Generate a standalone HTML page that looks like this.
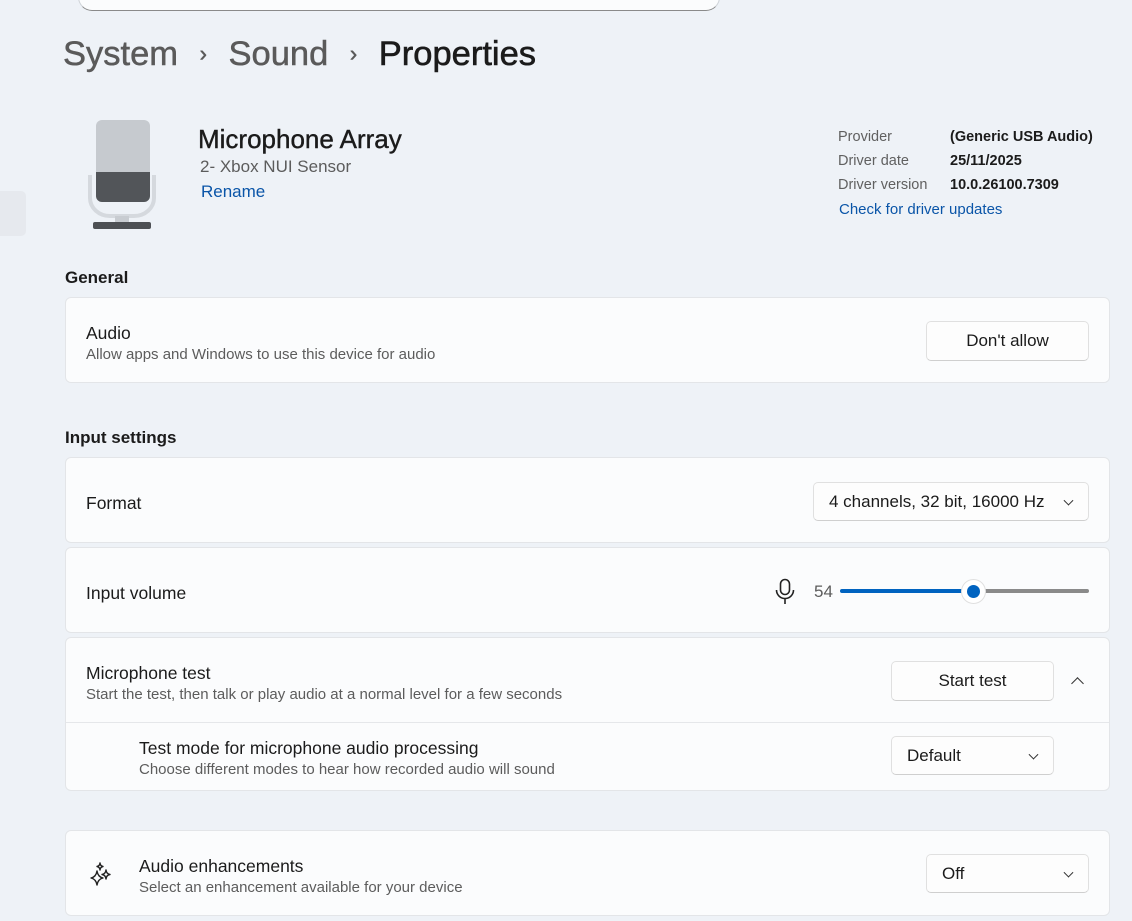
<!DOCTYPE html>
<html><head><style>
*{box-sizing:border-box;margin:0;padding:0}
body{width:1132px;height:921px;overflow:hidden;background:#eef2f7;font-family:"Liberation Sans",sans-serif;color:#1b1b1b;position:relative}
.abs{position:absolute}
.card{position:absolute;left:65px;width:1045px;background:#fbfcfd;border:1px solid #e3e5e8;border-radius:6px}
.t{font-size:17.5px;color:#1b1b1b}
.s{font-size:15px;color:#5c5c5c}
.btn{position:absolute;background:#fdfdfd;border:1px solid #e0e0e0;border-bottom-color:#cfcfcf;border-radius:5px;font-size:17px;color:#1b1b1b;display:flex;align-items:center}
.chev{position:absolute;right:16px;top:50%;width:7px;height:7px;border-right:1.3px solid #333;border-bottom:1.3px solid #333;transform:translateY(-70%) rotate(45deg)}
</style></head><body>
<div class="abs" style="left:78px;top:-20px;width:642px;height:31px;background:#fbfcfd;border:1px solid #cfd3d8;border-top:none;border-radius:0 0 14px 14px;border-bottom-color:#8a8a8a"></div>
<div class="abs" style="left:0;top:191px;width:26px;height:45px;background:#e6e9ee;border-radius:0 5px 5px 0"></div>
<div class="abs" style="left:63px;top:35px;font-size:34.5px;color:#5a5a5a;white-space:nowrap;-webkit-text-stroke:0.5px #5a5a5a">System <span style="font-size:22px;margin:0 12px;position:relative;top:-4px">›</span> Sound <span style="font-size:22px;margin:0 12px;position:relative;top:-4px">›</span> <span style="color:#1b1b1b;-webkit-text-stroke:0.6px #1b1b1b">Properties</span></div>
<svg class="abs" style="left:86px;top:118px" width="72" height="112" viewBox="0 0 72 112">
<path d="M4 57 V80 a20 18 0 0 0 20 18 H48 a20 18 0 0 0 20-18 V57" fill="none" stroke="#d5d9de" stroke-width="4"/>
<rect x="10" y="2" width="54" height="60" rx="6" fill="#c6cacf"/>
<path d="M10 54 H64 V78 a6 6 0 0 1-6 6 H16 a6 6 0 0 1-6-6Z" fill="#525559"/>
<rect x="29" y="98" width="14" height="8" fill="#c8ccd1"/>
<rect x="7" y="104" width="58" height="7" rx="2" fill="#4d5054"/>
</svg>
<div class="abs" style="left:198px;top:124px;font-size:26px;color:#1b1b1b;-webkit-text-stroke:0.4px #1b1b1b">Microphone Array</div>
<div class="abs" style="left:200px;top:157px;font-size:17px;color:#5c5c5c">2- Xbox NUI Sensor</div>
<div class="abs" style="left:201px;top:182px;font-size:17px;color:#0a55a8">Rename</div>
<div class="abs" style="left:838px;top:125px;font-size:14.5px;color:#606060;line-height:24px">Provider<br>Driver date<br>Driver version</div>
<div class="abs" style="left:950px;top:125px;font-size:14.5px;font-weight:bold;color:#1b1b1b;line-height:24px">(Generic USB Audio)<br>25/11/2025<br>10.0.26100.7309</div>
<div class="abs" style="left:839px;top:201px;font-size:15px;color:#0a55a8">Check for driver updates</div>

<div class="abs" style="left:65px;top:268px;font-size:17px;font-weight:bold;color:#1b1b1b">General</div>
<div class="card" style="top:297px;height:86px">
<div class="abs t" style="left:20px;top:25px">Audio</div>
<div class="abs s" style="left:20px;top:48px">Allow apps and Windows to use this device for audio</div>
<div class="btn" style="left:860px;top:23px;width:163px;height:40px;justify-content:center">Don't allow</div>
</div>

<div class="abs" style="left:65px;top:428px;font-size:17px;font-weight:bold;color:#1b1b1b">Input settings</div>
<div class="card" style="top:457px;height:86px">
<div class="abs t" style="left:20px;top:35px">Format</div>
<div class="btn" style="left:747px;top:24px;width:276px;height:39px;padding-left:15px">4 channels, 32 bit, 16000 Hz<span class="chev"></span></div>
</div>
<div class="card" style="top:547px;height:86px">
<div class="abs t" style="left:20px;top:35px">Input volume</div>
<svg class="abs" style="left:708px;top:30px" width="22" height="28" viewBox="0 0 22 28"><rect x="6.5" y="1.5" width="9" height="15" rx="4.5" fill="none" stroke="#222" stroke-width="1.6"/><path d="M2.5 12a8.5 8.5 0 0 0 17 0M11 20.5V26" fill="none" stroke="#222" stroke-width="1.6"/></svg>
<div class="abs" style="left:748px;top:34px;font-size:17px;color:#5c5c5c">54</div>
<div class="abs" style="left:774px;top:41px;width:134px;height:4px;background:#0063c0;border-radius:2px"></div>
<div class="abs" style="left:908px;top:41px;width:115px;height:4px;background:#8a8a8a;border-radius:2px"></div>
<div class="abs" style="left:895px;top:31px;width:25px;height:25px;border-radius:50%;background:#fff;border:1px solid #e0e0e0"></div>
<div class="abs" style="left:901px;top:37px;width:13px;height:13px;border-radius:50%;background:#0063c0"></div>
</div>
<div class="card" style="top:637px;height:154px">
<div class="abs t" style="left:20px;top:25px">Microphone test</div>
<div class="abs s" style="left:20px;top:48px">Start the test, then talk or play audio at a normal level for a few seconds</div>
<div class="btn" style="left:825px;top:23px;width:163px;height:40px;justify-content:center">Start test</div>
<div class="abs" style="left:1007px;top:41px;width:9px;height:9px;border-left:1.4px solid #333;border-top:1.4px solid #333;transform:rotate(45deg)"></div>
<div class="abs" style="left:0;top:84px;width:1043px;height:1px;background:#e5e7ea"></div>
<div class="abs t" style="left:73px;top:100px">Test mode for microphone audio processing</div>
<div class="abs s" style="left:73px;top:123px">Choose different modes to hear how recorded audio will sound</div>
<div class="btn" style="left:825px;top:98px;width:163px;height:39px;padding-left:15px">Default<span class="chev"></span></div>
</div>
<div class="card" style="top:830px;height:86px">
<svg class="abs" style="left:22px;top:30px" width="28" height="28" viewBox="0 0 28 28" fill="none" stroke="#222" stroke-width="1.4" stroke-linejoin="round"><path d="M9 10 Q10 16 15 17 Q10 18 9 24 Q8 18 3 17 Q8 16 9 10Z"/><path d="M18 9 Q18.5 13 22 13.5 Q18.5 14 18 18 Q17.5 14 14 13.5 Q17.5 13 18 9Z"/><path d="M12 2 Q12.3 5 15 5.5 Q12.3 6 12 9 Q11.7 6 9 5.5 Q11.7 5 12 2Z"/></svg>
<div class="abs t" style="left:73px;top:25px">Audio enhancements</div>
<div class="abs s" style="left:73px;top:48px">Select an enhancement available for your device</div>
<div class="btn" style="left:860px;top:23px;width:163px;height:39px;padding-left:15px">Off<span class="chev"></span></div>
</div>
</body></html>
